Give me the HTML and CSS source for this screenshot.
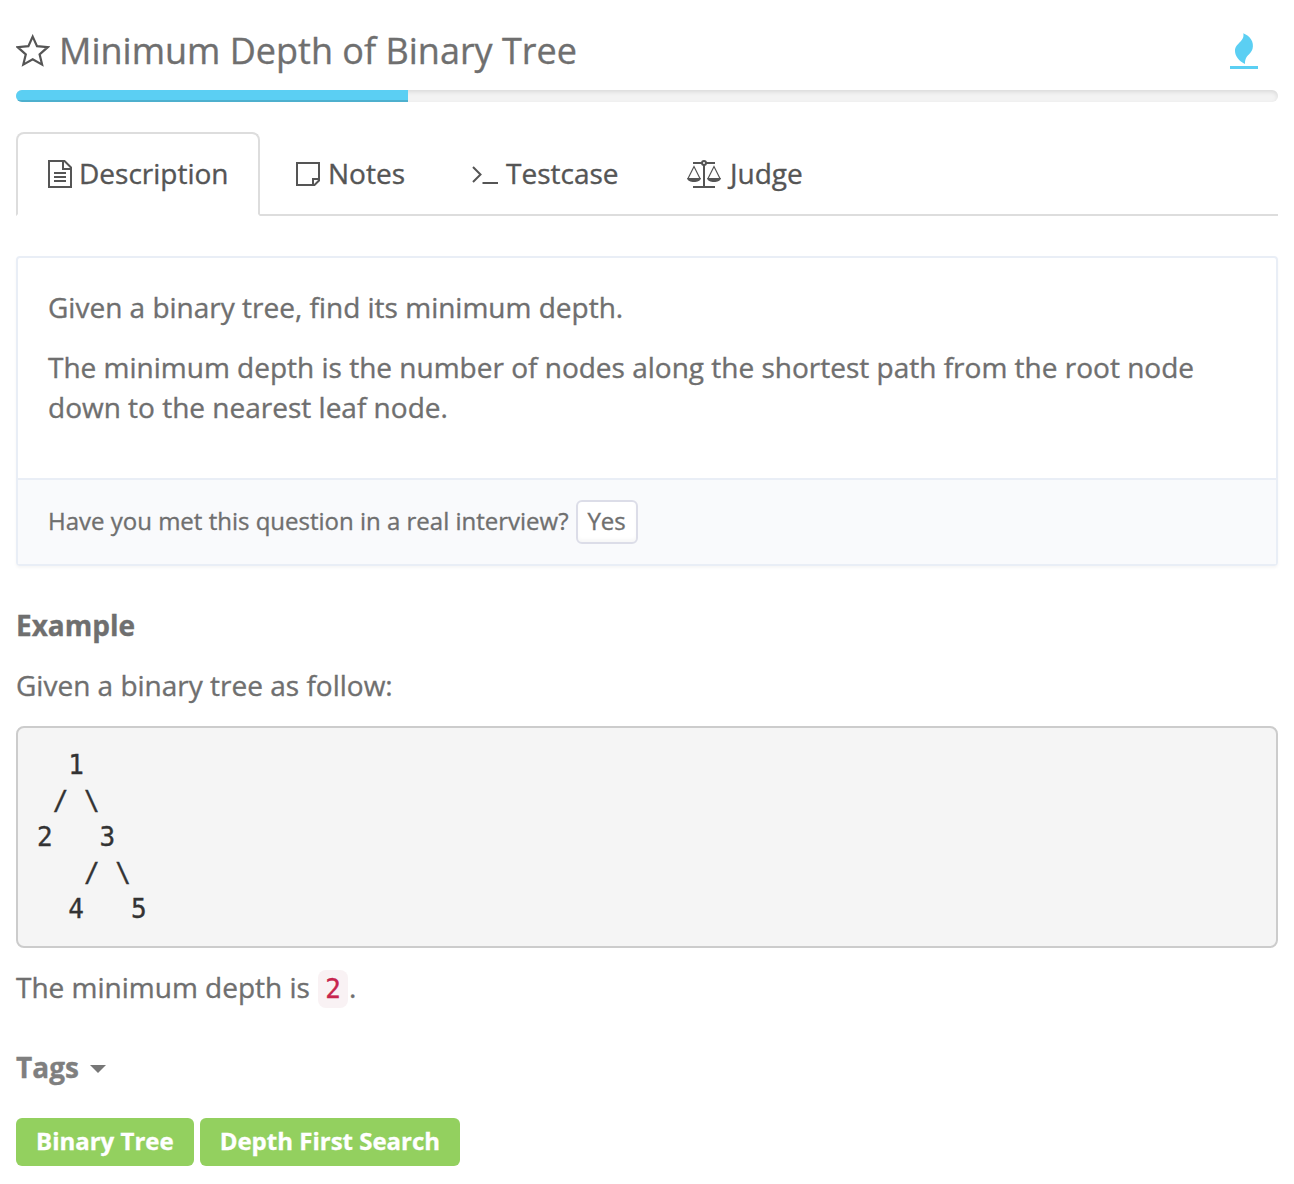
FILE: index.html
```html
<!DOCTYPE html>
<html lang="en">
<head>
<meta charset="utf-8">
<title>Minimum Depth of Binary Tree</title>
<link rel="stylesheet" href="styles.css">
</head>
<body>
<main class="page">
  <header class="title-row">
    <svg class="star" width="34" height="34" viewBox="0 0 34 34"><path d="M16.7 2.6L21 12.2L31.7 13.2L23.6 20.3L26.1 30.6L16.7 25.3L7.3 30.6L9.8 20.3L1.7 13.2L12.4 12.2Z"/></svg>
    <h1 class="title">Minimum Depth of Binary Tree</h1>
    <svg class="flame" width="28" height="38" viewBox="0 0 28 38"><path d="M13.3 .3C20 3 24.500 9 22.500 16C20.500 22 14.500 22.500 15 31C9 28 5 23 5 18C5 10 15 9 13.300 .3Z"/><path d="M0 33H28V36H0Z"/></svg>
  </header>
  <div class="progress"><div class="progress-bar" style="width:392px"></div></div>
  <nav class="tabs">
    <a class="tab active"><svg class="icon" width="24" height="28" viewBox="0 0 24 28"><path class="line" d="M1 1H16.500L23 7.500V27H1ZM15 1V9H23M6 13H18M6 17H18M6 21H18"/></svg><span>Description</span></a>
    <a class="tab notes"><svg class="icon" width="24" height="24" viewBox="0 0 24 24"><path class="line" d="M1 1H23V18.500L18.500 23H1ZM23 17H17V23"/></svg><span>Notes</span></a>
    <a class="tab testcase"><svg class="icon" width="26" height="24" viewBox="0 0 26 24"><path class="line" d="M1 5L8.500 12.500L1 20M10.500 21H26"/></svg><span>Testcase</span></a>
    <a class="tab judge"><svg class="icon" width="34" height="28" viewBox="0 0 34 28"><path class="line" d="M6 3H15M19 3H28M17 5V26M6 27H28"/><circle class="line" cx="17" cy="3" r="2"/><path class="thin" d="M1 18.500L7 6.500L13 18.500M21 18.500L27 6.500L33 18.500"/><path class="solid" d="M0 18H14C13.500 23.300 .5 23.300 0 18ZM20 18H34C33.500 23.300 20.500 23.300 20 18Z"/></svg><span>Judge</span></a>
    <div class="tab-rest"></div>
  </nav>
  <section class="panel">
    <div class="panel-body">
      <p>Given a binary tree, find its minimum depth.</p>
      <p>The minimum depth is the number of nodes along the shortest path from the root node down to the nearest leaf node.</p>
    </div>
    <div class="panel-footer"><span class="question">Have you met this question in a real interview?</span><button class="yes">Yes</button></div>
  </section>
  <h2 class="heading">Example</h2>
  <p class="lead">Given a binary tree as follow:</p>
<pre class="tree">  1
 / \
2   3
   / \
  4   5</pre>
  <p class="result">The minimum depth is <code>2</code>.</p>
  <h2 class="heading tags-heading">Tags<span class="caret"></span></h2>
  <div class="tags"><span class="tag">Binary Tree</span><span class="tag">Depth First Search</span></div>
</main>
</body>
</html>
```
FILE: styles.css
```css
* { box-sizing: border-box; }
body {
  margin: 0;
  background: #fff;
  color: #6f6f6f;
  font: 28px/40px "Open Sans", sans-serif;
  -webkit-text-stroke: .35px currentColor;
}
p, h1, h2, pre { margin: 0; }
.page { padding: 12px 16px 0; }
.title-row { display: flex; align-items: center; height: 78px; padding-right: 20px; }
.star { fill: none; stroke: #555; stroke-width: 2.2; }
.title { margin-left: 9px; font-size: 36px; font-weight: 400; line-height: 50px; }
.flame { margin: 2px 0 0 auto; fill: #5bcff3; }
.progress {
  height: 12px;
  border-radius: 6px;
  overflow: hidden;
  background: #f3f3f3;
  box-shadow: inset 0 2px 4px rgba(0, 0, 0, .1);
}
.progress-bar { height: 100%; background: #5bcff3; box-shadow: inset 0 -2px 0 rgba(0, 0, 0, .15); }
.tabs { display: flex; height: 84px; margin-top: 30px; color: #555; }
.tab { display: flex; align-items: center; border-bottom: 2px solid #ddd; }
.tab span { margin-top: -2px; }
.tab.active {
  width: 244px;
  padding-left: 30px;
  border: 2px solid #ddd;
  border-bottom-color: transparent;
  border-radius: 8px 8px 0 0;
}
.icon { flex: none; margin-right: 8px; }
.active .icon { margin-right: 7px; }
.judge .icon { margin-right: 9px; }
.line { fill: none; stroke: #555; stroke-width: 2; }
.thin { fill: none; stroke: #555; stroke-width: 1.2; }
.solid { fill: #555; }
.notes { width: 176px; padding-left: 36px; }
.testcase { width: 215px; padding-left: 36px; }
.judge { width: 116px; padding-left: 36px; }
.notes, .testcase, .judge { padding-top: 2px; white-space: nowrap; }
.tab-rest { flex: 1; border-bottom: 2px solid #ddd; }
.panel {
  margin-top: 40px;
  border: 2px solid #e9eef6;
  border-radius: 4px;
  box-shadow: 0 2px 3px rgba(0, 0, 0, .04);
}
.panel-body { height: 220px; padding: 29px 30px; }
.panel-body p { margin-bottom: 20px; }
.panel-footer {
  display: flex;
  align-items: center;
  gap: 7px;
  height: 86px;
  padding-left: 30px;
  border-top: 2px solid #e9eef6;
  background: #f9fafc;
  font-size: 24px;
}
.question { margin-top: -2px; }
.yes {
  width: 62px;
  height: 44px;
  padding: 0 0 2px;
  border: 2px solid #dcdde8;
  border-radius: 6px;
  background: #fff;
  box-shadow: inset 0 -3px 3px rgba(0, 0, 0, .03);
  color: #6f6f6f;
  font: 24px/36px "Open Sans", sans-serif;
}
.heading { margin-top: 39px; font-size: 28px; font-weight: 700; line-height: 40px; }
.lead { margin-top: 20px; }
.tree {
  height: 222px;
  margin-top: 21px;
  padding: 19px;
  border: 2px solid #ccc;
  border-radius: 8px;
  background: #f5f5f5;
  color: #333;
  font: 26px/36px "DejaVu Sans Mono", monospace;
}
.result { margin-top: 19px; }
.result code {
  margin: 0 1px;
  padding: 4px 7px;
  border-radius: 8px;
  background: #f9f2f4;
  color: #c7254e;
  font: 26px/30px "DejaVu Sans Mono", monospace;
}
.tags-heading { display: flex; align-items: center; margin-top: 40px; color: #7f7f7f; }
.caret {
  margin: 4px 0 0 11px;
  border: 8px solid transparent;
  border-top-color: #777;
  border-bottom: 0;
}
.tags { display: flex; gap: 6px; margin-top: 31px; }
.tag {
  height: 48px;
  padding: 0 20px;
  border-radius: 6px;
  background: #93d05f;
  color: #fff;
  font-size: 24px;
  font-weight: 700;
  line-height: 46px;
}
```
